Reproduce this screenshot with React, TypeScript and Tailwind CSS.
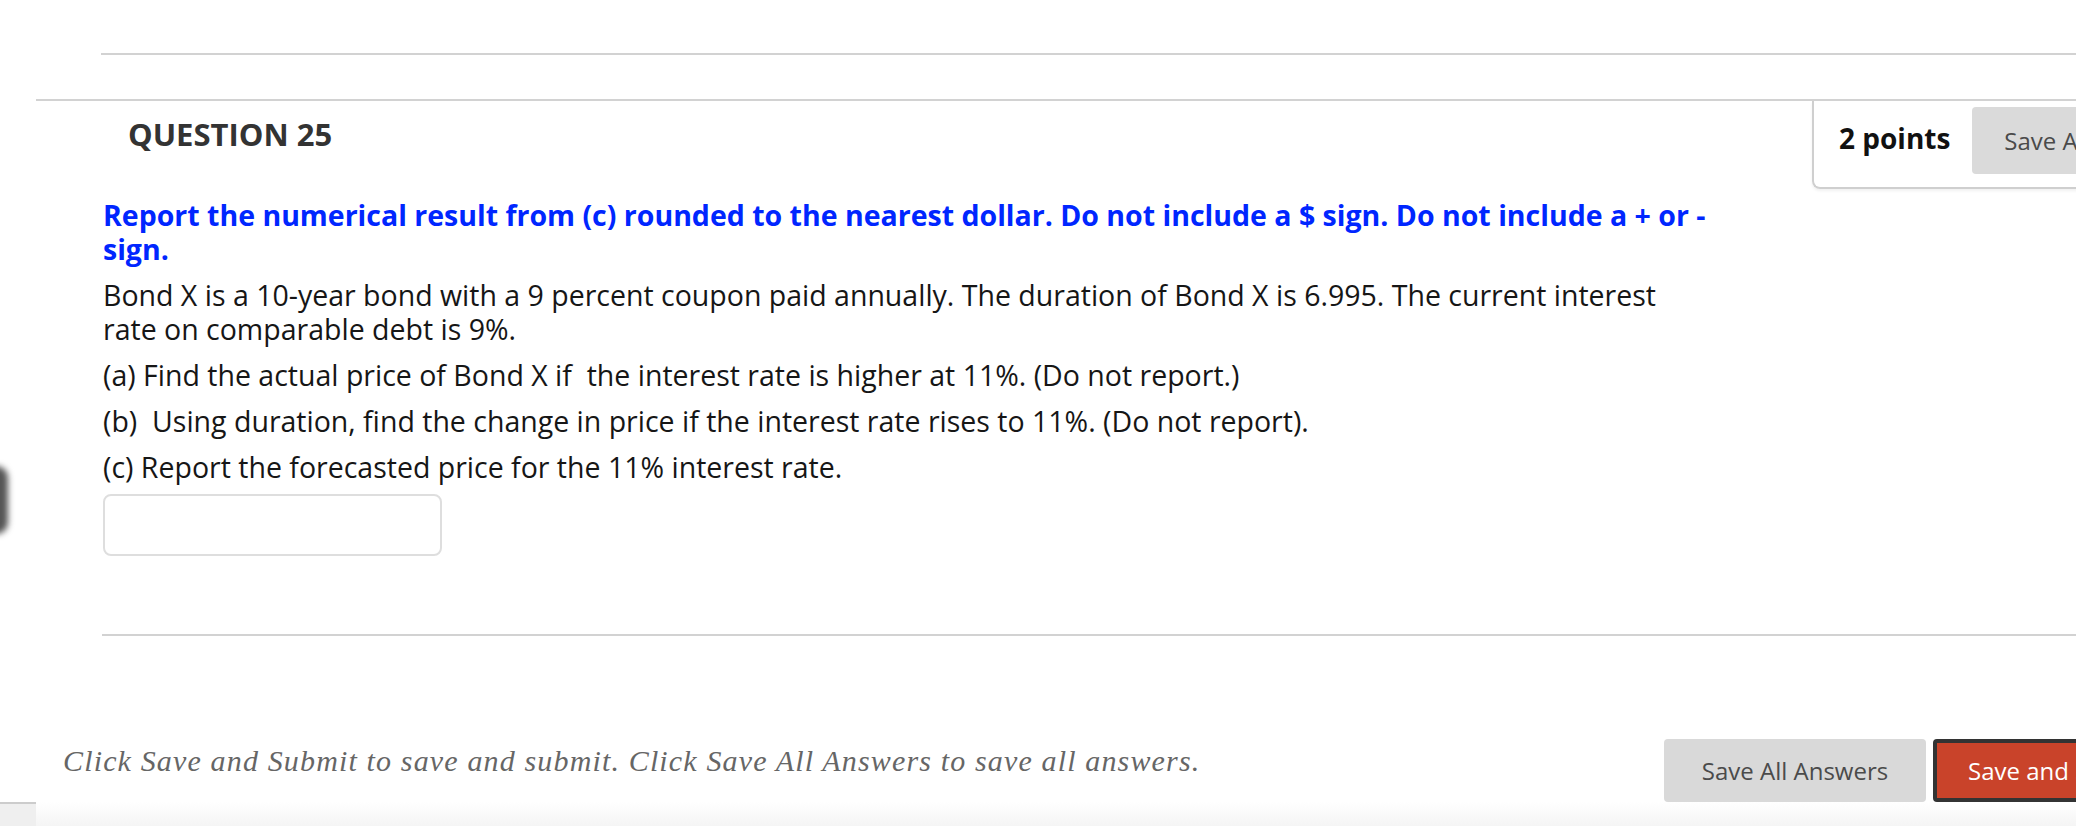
export default function App() {
  return (
    <div className="relative w-[2076px] h-[826px] overflow-hidden bg-white font-['Open_Sans',sans-serif]">
      {/* side handle peeking from the left edge */}
      <div className="absolute left-[-22px] top-[466px] w-[30px] h-[68px] rounded-[12px] bg-[#555] blur-[3px]" />

      <div className="pt-[53px]">
        <div className="ml-[101px] h-[2px] bg-[#d2d2d2]" />
      </div>
      <div className="mt-[44px] ml-[36px] h-[2px] bg-[#d2d2d2]" />

      <section className="ml-[36px]">
        <div className="flex items-start">
          <h2 className="w-[1776px] shrink-0 pl-[92px] pt-[11px] text-[31px] font-bold leading-[44px] text-[#333]">
            QUESTION 25
          </h2>
          <div className="flex h-[88px] w-[400px] shrink-0 items-start gap-[22px] rounded-bl-[8px] border-b-2 border-l-2 border-[#cfcfcf] pl-[25px] pt-[6px] shadow-[0_2px_3px_rgba(0,0,0,0.06)]">
            <span className="mt-[12px] text-[28px] font-bold leading-[38px] text-[#111]">2 points</span>
            <button className="h-[67px] shrink-0 whitespace-nowrap rounded-[4px] bg-[#dadada] px-[32px] text-[24px] text-[#4a4a4a]">
              Save Answer
            </button>
          </div>
        </div>

        <div className="ml-[67px] mt-[9px] w-[1612px] text-[28.5px] leading-[34px]">
          <p className="font-bold text-[#0026ff]">
            Report the numerical result from (c) rounded to the nearest dollar. Do not include a $ sign. Do not include a + or - sign.
          </p>
          <p className="mt-[12px] text-[#161616]">
            Bond X is a 10-year bond with a 9 percent coupon paid annually. The duration of Bond X is 6.995. The current interest rate on comparable debt is 9%.
          </p>
          <p className="mt-[12px] text-[#161616]">(a) Find the actual price of Bond X if&nbsp; the interest rate is higher at 11%. (Do not report.)</p>
          <p className="mt-[12px] text-[#161616]">(b)&nbsp; Using duration, find the change in price if the interest rate rises to 11%. (Do not report).</p>
          <p className="mt-[12px] text-[#161616]">(c) Report the forecasted price for the 11% interest rate.</p>
          <input
            type="text"
            className="mt-[10px] block h-[62px] w-[339px] rounded-[8px] border-2 border-[#dedede] bg-white px-3 text-[26px] outline-none"
          />
        </div>
      </section>

      <div className="ml-[102px] mt-[78px] h-[2px] bg-[#d2d2d2]" />

      <footer className="mt-[103px] flex items-start">
        <p className="w-[1664px] shrink-0 pl-[63px] pt-[5px] font-['Liberation_Serif',serif] text-[30px] italic leading-[34px] tracking-[1.15px] text-[#666]">
          Click Save and Submit to save and submit. Click Save All Answers to save all answers.
        </p>
        <div className="flex shrink-0 gap-[7px]">
          <button className="h-[63px] w-[262px] rounded-[4px] bg-[#d9d9d9] text-[24px] text-[#4b4b4b]">Save All Answers</button>
          <button className="h-[63px] whitespace-nowrap rounded-[4px] border-4 border-[#333] bg-[#c9432a] px-[31px] text-[24px] text-white">
            Save and Submit
          </button>
        </div>
      </footer>

      <div className="flex h-[30px]">
        <div className="w-[36px] border-t-2 border-[#cccccc] bg-[#efefef]" />
        <div className="flex-1 bg-gradient-to-b from-white to-[#f2f2f2]" />
      </div>
    </div>
  );
}
